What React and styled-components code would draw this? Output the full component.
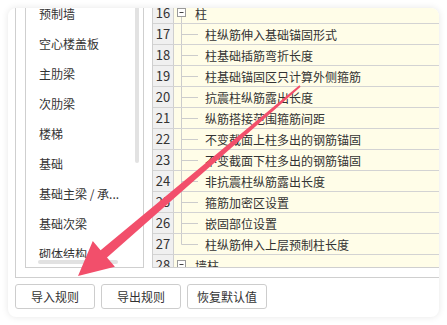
import React from 'react';
import styled, { createGlobalStyle } from 'styled-components';

const GlobalStyle = createGlobalStyle`
	body {
		margin: 0;
		background: #fff;
		font-family: "Noto Sans CJK SC", "Noto Sans", sans-serif;
		color: #333;
	}
`;

const categories = [
	'预制墙',
	'空心楼盖板',
	'主肋梁',
	'次肋梁',
	'楼梯',
	'基础',
	'基础主梁 / 承...',
	'基础次梁',
	'砌体结构',
];

const rules = [
	{ n: 16, text: '柱', parent: true },
	{ n: 17, text: '柱纵筋伸入基础锚固形式' },
	{ n: 18, text: '柱基础插筋弯折长度' },
	{ n: 19, text: '柱基础锚固区只计算外侧箍筋' },
	{ n: 20, text: '抗震柱纵筋露出长度' },
	{ n: 21, text: '纵筋搭接范围箍筋间距' },
	{ n: 22, text: '不变截面上柱多出的钢筋锚固' },
	{ n: 23, text: '不变截面下柱多出的钢筋锚固' },
	{ n: 24, text: '非抗震柱纵筋露出长度' },
	{ n: 25, text: '箍筋加密区设置' },
	{ n: 26, text: '嵌固部位设置' },
	{ n: 27, text: '柱纵筋伸入上层预制柱长度', last: true },
	{ n: 28, text: '墙柱', parent: true },
];

function Expander() {
	return (
		<svg width="18" height="20" viewBox="0 0 18 20">
			<rect x="0.5" y="5.5" width="8" height="8" fill="#fff" stroke="#9a9a9a" />
			<line x1="2.5" y1="9.5" x2="6.5" y2="9.5" stroke="#444" />
			<line x1="4.5" y1="14" x2="4.5" y2="20" stroke="#cccccc" />
		</svg>
	);
}

function Guide({ last }) {
	return (
		<svg width="28" height="20" viewBox="0 0 28 20">
			<line x1="4.5" y1="0" x2="4.5" y2={last ? 10.5 : 20} stroke="#cccccc" />
			<line x1="4.5" y1="10.5" x2="21" y2="10.5" stroke="#cccccc" />
		</svg>
	);
}

function App() {
	return (
		<Page>
			<GlobalStyle />
			<Card>
				<Group>
					<List>
						{categories.map((c) => (
							<Item key={c}>{c}</Item>
						))}
						<VThumb />
						<HTrack>
							<HThumb />
						</HTrack>
					</List>
					<Table>
						{rules.map((r) => (
							<Row key={r.n}>
								<Num>{r.n}</Num>
								<Cell>
									{r.parent ? <Expander /> : <Guide last={r.last} />}
									<span>{r.text}</span>
								</Cell>
							</Row>
						))}
					</Table>
				</Group>
				<Buttons>
					<Button>导入规则</Button>
					<Button>导出规则</Button>
					<Button>恢复默认值</Button>
				</Buttons>
			</Card>
			<Arrow width="447" height="325" viewBox="0 0 447 325">
				<polygon
					fill="#f24f6b"
					points="300.6,86.8 299.4,85.2 100.6,250.2 92.8,241 78,276 114.9,266.8 107,257.6"
				/>
			</Arrow>
		</Page>
	);
}

const Page = styled.div`
	position: relative;
	width: 447px;
	height: 325px;
	padding: 8px;
	box-sizing: border-box;
	overflow: hidden;
`;

const Card = styled.div`
	width: 431px;
	height: 309px;
	box-sizing: border-box;
	padding: 0 0 8px 7px;
	background: #fff;
	border-radius: 8px;
	box-shadow: 0 0 7px rgba(0, 0, 0, 0.1);
	overflow: hidden;
	display: flex;
	flex-direction: column;
`;

const Group = styled.div`
	margin-top: -20px;
	width: 480px;
	flex: none;
	display: flex;
	gap: 8px;
	padding: 9px;
	border: 1px solid #cfcfcf;
	box-sizing: border-box;
	height: 290px;
`;

const List = styled.div`
	position: relative;
	width: 119px;
	height: 270px;
	flex: none;
	box-sizing: border-box;
	border: 1px solid #cfcfcf;
	background: #fff;
	overflow: hidden;
`;

const Item = styled.div`
	height: 30px;
	line-height: 30px;
	padding-left: 13px;
	font-size: 12px;
	color: #333;
	white-space: nowrap;
`;

const VThumb = styled.div`
	position: absolute;
	top: 0;
	right: 4px;
	width: 4px;
	height: 164px;
	border-radius: 2px;
	background: #e2e2e2;
`;

const HTrack = styled.div`
	position: absolute;
	left: 0;
	right: 0;
	bottom: 0;
	height: 9px;
	background: #fff;
`;

const HThumb = styled.div`
	margin: 2px 0 0 12px;
	width: 80px;
	height: 4px;
	border-radius: 2px;
	background: #e2e2e2;
`;

const Table = styled.div`
	flex: 1;
	margin-top: 4px;
	box-sizing: border-box;
	border: 1px solid #cfcfcf;
	border-right: none;
	background: #fffde8;
	overflow: hidden;
`;

const Row = styled.div`
	display: flex;
	height: 21px;
	box-sizing: border-box;
	border-bottom: 1px solid #d3d3d3;
`;

const Num = styled.div`
	width: 21px;
	flex: none;
	box-sizing: border-box;
	border-right: 1px solid #cfcfcf;
	background: #f0f0f0;
	text-align: center;
	line-height: 20px;
	font-size: 13px;
	color: #333;
`;

const Cell = styled.div`
	flex: 1;
	display: flex;
	align-items: center;
	padding-left: 3px;
	font-size: 12px;
	color: #333;
	white-space: nowrap;

	svg {
		flex: none;
	}
`;

const Buttons = styled.div`
	display: flex;
	gap: 6px;
	margin-top: 6px;
`;

const Button = styled.button`
	width: 80px;
	height: 25px;
	padding: 0;
	box-sizing: border-box;
	border: 1px solid #cdcdcd;
	border-radius: 3px;
	background: #fff;
	font-family: "Noto Sans CJK SC", sans-serif;
	font-size: 12px;
	color: #333;
`;

const Arrow = styled.svg`
	position: absolute;
	top: 0;
	left: 0;
	pointer-events: none;
`;

export default App;
